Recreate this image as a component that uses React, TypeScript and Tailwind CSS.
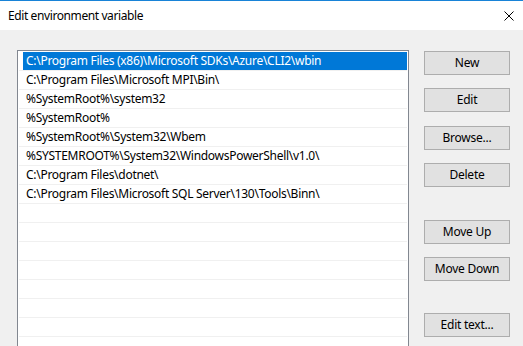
import React from "react";

const paths = [
  "C:\\Program Files (x86)\\Microsoft SDKs\\Azure\\CLI2\\wbin",
  "C:\\Program Files\\Microsoft MPI\\Bin\\",
  "%SystemRoot%\\system32",
  "%SystemRoot%",
  "%SystemRoot%\\System32\\Wbem",
  "%SYSTEMROOT%\\System32\\WindowsPowerShell\\v1.0\\",
  "C:\\Program Files\\dotnet\\",
  "C:\\Program Files\\Microsoft SQL Server\\130\\Tools\\Binn\\",
];

const rows = [...paths, ...Array(8).fill("")];

function Btn({ label, className }: { label: string; className: string }) {
  return (
    <button
      className={
        "w-[86px] h-[24px] shrink-0 bg-[#e1e1e1] border border-[#adadad] text-[12px] tracking-[-0.25px] text-black leading-none flex items-center justify-center " +
        className
      }
    >
      {label}
    </button>
  );
}

export default function App() {
  return (
    <div
      className="w-[523px] h-[346px] overflow-hidden flex flex-col bg-white"
      style={{ fontFamily: '"Noto Sans", "Segoe UI", sans-serif' }}
    >
      <div className="h-px shrink-0 bg-[#1883d7]" />
      <div className="h-[29px] shrink-0 flex items-center justify-between pl-[8px] pr-[9px] bg-white">
        <span className="text-[12px] tracking-[-0.4px] text-black">Edit environment variable</span>
        <svg width="10" height="10" viewBox="0 0 10 10" className="block">
          <path d="M0.5 0.5 L9.5 9.5 M9.5 0.5 L0.5 9.5" stroke="#000" strokeWidth="1" />
        </svg>
      </div>
      <div className="flex-1 min-h-0 overflow-hidden bg-[#f0f0f0] flex items-start pt-[20px] pl-[17px]">
        <div className="w-[392px] h-[320px] shrink-0 border border-[#828790] bg-white pt-px">
          {rows.map((p, i) => (
            <div
              key={i}
              className="h-[19px] ml-px mr-px border-b border-[#f0f0f0] flex"
            >
              <div
                className={
                  "ml-[4px] flex-1 flex items-center pl-[3px] text-[12px] tracking-[-0.28px] whitespace-nowrap " +
                  (i === 0 ? "bg-[#0078d7] text-white" : "text-black")
                }
              >
                {p}
              </div>
            </div>
          ))}
        </div>
        <div className="ml-[15px] flex flex-col">
          <Btn label="New" className="mt-px" />
          <Btn label="Edit" className="mt-[13px]" />
          <Btn label="Browse..." className="mt-[14px]" />
          <Btn label="Delete" className="mt-[13px]" />
          <Btn label="Move Up" className="mt-[33px]" />
          <Btn label="Move Down" className="mt-[13px]" />
          <Btn label="Edit text..." className="mt-[32px]" />
        </div>
      </div>
    </div>
  );
}
